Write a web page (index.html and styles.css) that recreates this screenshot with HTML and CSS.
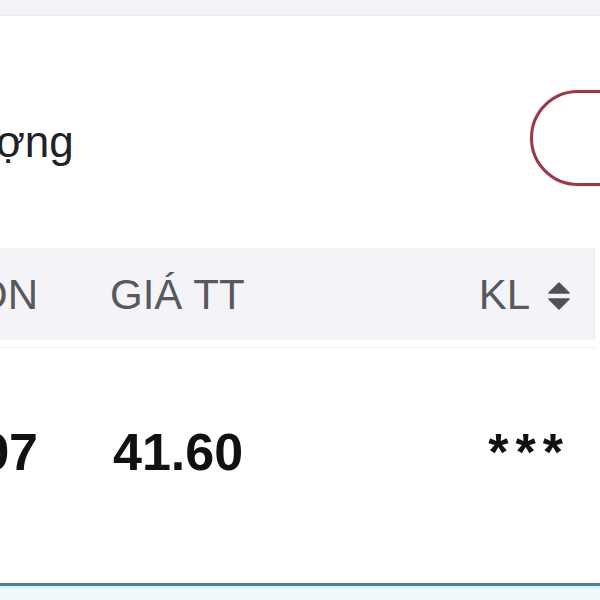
FILE: index.html
```html
<!DOCTYPE html>
<html lang="vi">
<head>
<meta charset="utf-8">
<link rel="stylesheet" href="styles.css">
</head>
<body>
<div class="screen">
  <div class="topbar"></div>
  <div class="filter-row">
    <span class="filter-label">ợng</span>
    <div class="pill"></div>
  </div>
  <div class="table-head">
    <div class="cell cell-a">ÓN</div>
    <div class="cell cell-b">GIÁ TT</div>
    <div class="cell cell-c">KL
      <svg class="sort" width="22" height="28" viewBox="0 0 22 28">
        <path d="M11 1 L21 11 L1 11 Z" fill="#505055" stroke="#505055" stroke-width="1.5" stroke-linejoin="round"/>
        <path d="M1 17 L21 17 L11 27 Z" fill="#505055" stroke="#505055" stroke-width="1.5" stroke-linejoin="round"/>
      </svg>
    </div>
  </div>
  <div class="divider"></div>
  <div class="table-row">
    <div class="cell cell-a">97</div>
    <div class="cell cell-b">41.60</div>
    <div class="cell cell-c">***</div>
  </div>
  <div class="bottom-bar"></div>
</div>
</body>
</html>
```
FILE: styles.css
```css
html, body {
  margin: 0;
  padding: 0;
  background: #ffffff;
}
body {
  width: 600px;
  height: 600px;
  overflow: hidden;
  font-family: "Liberation Sans", Arial, sans-serif;
}
.screen {
  width: 600px;
  height: 600px;
  display: flex;
  flex-direction: column;
  overflow: hidden;
}
.topbar {
  height: 15px;
  background: #f3f3f6;
  border-bottom: 1px solid #ececf0;
  flex: none;
}
.filter-row {
  height: 232px;
  flex: none;
  display: flex;
  align-items: flex-start;
  padding-top: 74px;
  box-sizing: border-box;
}
.filter-label {
  font-size: 44px;
  line-height: 48px;
  color: #222226;
  margin-left: -4px;
  margin-top: 28px;
}
.pill {
  margin-left: auto;
  margin-right: -60px;
  width: 130px;
  height: 96px;
  box-sizing: border-box;
  border: 3px solid #96394a;
  border-radius: 48px;
  box-shadow: 0 0 2px rgba(220, 120, 130, 0.5);
  flex: none;
}
.table-head {
  height: 92px;
  flex: none;
  background: #f4f4f8;
  margin-right: 5px;
  border-right: 1px solid #ececf0;
  display: flex;
  align-items: flex-start;
  padding-top: 23px;
  box-sizing: border-box;
  font-size: 42px;
  line-height: 48px;
  color: #58585d;
}
.cell {
  display: flex;
  white-space: nowrap;
}
.cell-a {
  width: 38px;
  justify-content: flex-end;
  flex: none;
}
.cell-b {
  margin-left: 72px;
  flex: none;
}
.cell-c {
  flex: 1;
  justify-content: flex-end;
  align-items: center;
}
.table-head .cell-c {
  padding-right: 24px;
}
.sort {
  margin-left: 18px;
  margin-top: 2px;
}
.divider {
  height: 7px;
  flex: none;
  border-bottom: 1px solid #f0f0f3;
  margin-right: 5px;
}
.table-row {
  flex: 1;
  display: flex;
  align-items: flex-start;
  padding-top: 74px;
  box-sizing: border-box;
  font-size: 52px;
  line-height: 60px;
  font-weight: bold;
  color: #111114;
}
.table-row .cell-b {
  margin-left: 75px;
}
.table-row .cell-c {
  padding-right: 30px;
  letter-spacing: 7px;
}
.bottom-bar {
  height: 17px;
  flex: none;
  border-top: 3px solid #4f7da8;
  background: linear-gradient(#cdeef6, #eef9fb 4px, #f2f8fb);
  box-sizing: border-box;
}
```
